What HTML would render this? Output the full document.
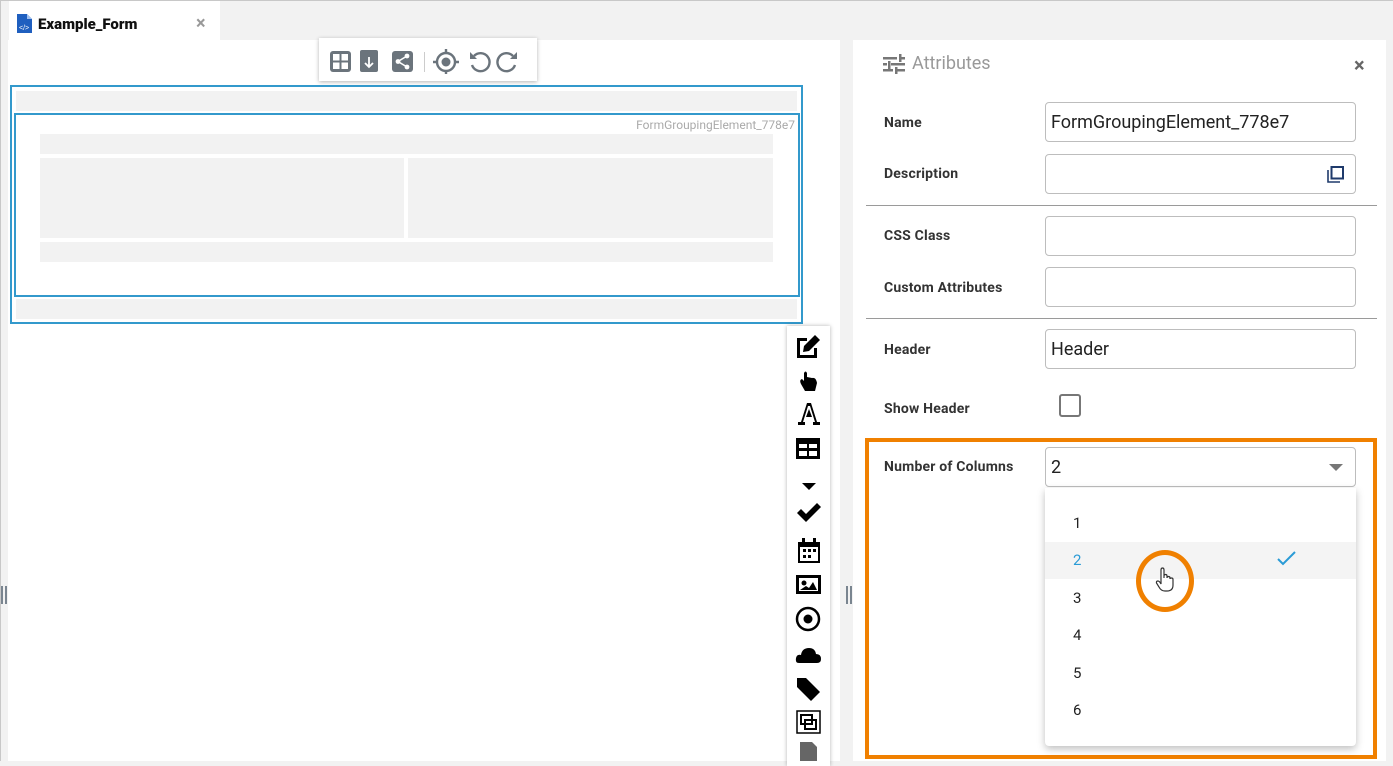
<!DOCTYPE html>
<html><head><meta charset="utf-8">
<style>
*{box-sizing:border-box;margin:0;padding:0}
body{width:1393px;height:761px;background:#f2f2f2;position:relative;overflow:hidden;font-family:"Roboto","Liberation Sans",sans-serif}
.a{position:absolute}
.g{position:absolute;background:#f2f2f2}
.lbl{position:absolute;left:884px;font-size:14px;font-weight:bold;color:#333;letter-spacing:.2px}
.inp{position:absolute;left:1045px;width:311px;height:40px;border:1px solid #bdbdbd;border-radius:4px;background:#fff;font-size:18px;color:#222;padding:9px 0 0 5px}
.hr{position:absolute;left:866px;width:511px;height:1px;background:#9a9a9a}
.it{position:absolute;left:1073px;font-size:15px;color:#222}
</style></head><body>
<div class="a" style="left:0;top:0;width:1393px;height:1px;background:#c8c8c8"></div>
<div class="a" style="left:0;top:0;width:1px;height:761px;background:#c8c8c8"></div>
<!-- tab -->
<div class="a" style="left:9px;top:1px;width:211px;height:39px;background:#fff"></div>
<svg class="a" style="left:17px;top:14px" width="15" height="19" viewBox="0 0 15 19"><path d="M0 0H10L15 5V19H0Z" fill="#1f5fbf"/><path d="M10 0V5H15" fill="#9fbfee"/><text x="2" y="16" font-size="7" fill="#fff" font-family="Liberation Sans">&lt;/&gt;</text></svg>
<div class="a" style="left:38px;top:15px;font-size:15px;font-weight:900;color:#111">Example_Form</div>
<div class="a" style="left:196px;top:13px;font-size:18px;color:#999;font-weight:bold">×</div>
<!-- left strip handle -->
<div class="a" style="left:1px;top:586px;width:6px;height:18px;border-left:2px solid #7a8590;border-right:2px solid #7a8590"></div>
<!-- canvas -->
<div class="a" style="left:8px;top:40px;width:832px;height:721px;background:#fff"></div>
<div class="a" style="left:319px;top:38px;width:218px;height:43px;background:#fff;box-shadow:0 1px 4px rgba(0,0,0,.3)"></div>
<svg class="a" style="left:329px;top:48px" width="200" height="26" viewBox="0 0 200 26">
<g fill="#6b747c">
<rect x="1" y="3" width="21" height="21" rx="3"/>
<rect x="31" y="2" width="18" height="22" rx="2"/>
<rect x="63" y="3" width="21" height="21" rx="3"/>
</g>
<g fill="#fff"><rect x="4" y="6" width="6.5" height="6.5"/><rect x="12.5" y="6" width="6.5" height="6.5"/><rect x="4" y="14.5" width="6.5" height="6.5"/><rect x="12.5" y="14.5" width="6.5" height="6.5"/>
<circle cx="78" cy="8" r="2.4"/><circle cx="78" cy="19" r="2.4"/><circle cx="69" cy="13.5" r="2.4"/></g>
<path d="M78 8L69 13.5L78 19" stroke="#fff" stroke-width="1.6" fill="none"/>
<path d="M40 9V19M36 15L40 19L44 15" stroke="#fff" stroke-width="1.8" fill="none"/>
<rect x="95" y="4" width="1" height="20" fill="#ccc"/>
<g stroke="#6b747c" stroke-width="2.4" fill="none"><circle cx="117" cy="14" r="9"/><path d="M117 1V5M117 23V27M104 14H108M126 14H130"/>
<path d="M145 8A9 9 0 1 1 143 17"/><path d="M184 8A9 9 0 1 0 186 17"/></g>
<circle cx="117" cy="14" r="4.5" fill="#6b747c"/>
<path d="M141 4V11H148Z" fill="#6b747c"/><path d="M188 4V11H181Z" fill="#6b747c"/>
</svg>
<div class="a" style="left:10px;top:85px;width:793px;height:239px;border:2px solid #3399cc"></div>
<div class="g" style="left:16px;top:91px;width:781px;height:20px"></div>
<div class="a" style="left:14px;top:113px;width:786px;height:184px;border:2px solid #3399cc"></div>
<div class="a" style="left:600px;top:118px;width:195px;text-align:right;font-size:12px;color:#aaa">FormGroupingElement_778e7</div>
<div class="g" style="left:40px;top:134px;width:733px;height:20px"></div>
<div class="g" style="left:40px;top:158px;width:364px;height:80px"></div>
<div class="g" style="left:408px;top:158px;width:365px;height:80px"></div>
<div class="g" style="left:40px;top:242px;width:733px;height:20px"></div>
<div class="g" style="left:16px;top:299px;width:781px;height:20px"></div>
<!-- vertical toolbar -->
<div class="a" style="left:787px;top:326px;width:43px;height:440px;background:#fff;box-shadow:0 0 4px rgba(0,0,0,.3)"></div>
<svg class="a" style="left:795px;top:333px" width="28" height="428" viewBox="0 0 28 428">
<g fill="#000">
<path d="M2 5H12V8H5V22H19V15H22V25H2Z"/><path d="M20 2L25 7L14 18L8 19L9 13Z"/>
<path d="M9 40V48L7 46Q4 47 6 51L10 58H20L22 50Q21 44 17 45L12 44V40Q10.5 37 9 40Z"/>
<path d="M3 92H10V89H8L13 73H15L20 89H18V92H25V89H22L16 70H12L6 89H3ZM11 84H17L14 76Z"/>
<path d="M1 105H25V126H1ZM4 111V115H12V111ZM14 111V115H22V111ZM4 118V123H12V118ZM14 118V123H22V118Z"/>
<path d="M7 150H21L14 157Z"/>
<path d="M2 180L6 176L11 181L22 170L26 174L11 189Z"/>
<path d="M3 209H25V230H3ZM5 214V228H23V214ZM7 205H10V211H7ZM18 205H21V211H18Z"/>
<rect x="8" y="216" width="3" height="3"/><rect x="13" y="216" width="3" height="3"/><rect x="18" y="216" width="3" height="3"/><rect x="8" y="222" width="3" height="3"/><rect x="13" y="222" width="3" height="3"/>
<path d="M1 242H26V261H1ZM4 245V258H23V245Z"/><circle cx="9" cy="250" r="2.5"/><path d="M5 257L11 253L14 255L18 249L22 257Z"/>
<circle cx="13" cy="286" r="11" fill="none" stroke="#000" stroke-width="2.5"/><circle cx="13" cy="286" r="4.5"/>
<path d="M4 330Q0 330 1 325Q2 321 6 322Q7 315 14 315Q20 315 21 321Q26 321 26 326Q26 330 22 330Z"/>
<path d="M2 345V354L16 368L25 359L11 345Z"/>
<path d="M2 378H25V400H2Z" fill="none" stroke="#000" stroke-width="1.5"/><rect x="6" y="382" width="11" height="9" fill="none" stroke="#000" stroke-width="2"/><rect x="10" y="387" width="11" height="9" fill="none" stroke="#000" stroke-width="2"/>
<path d="M5 409H17L22 414V428H5Z" fill="#666"/>
</g>
</svg>
<!-- splitter -->
<div class="a" style="left:846px;top:586px;width:6px;height:18px;border-left:2px solid #7a8590;border-right:2px solid #7a8590"></div>
<!-- right panel -->
<div class="a" style="left:853px;top:40px;width:533px;height:721px;background:#fff"></div>
<svg class="a" style="left:883px;top:54px" width="22" height="20" viewBox="0 0 22 20"><g fill="#777"><rect x="0" y="3" width="14" height="2.5"/><rect x="16" y="0" width="2.5" height="8"/><rect x="18" y="3" width="4" height="2.5"/><rect x="0" y="9" width="4" height="2.5"/><rect x="5" y="7" width="2.5" height="8"/><rect x="8" y="9" width="14" height="2.5"/><rect x="0" y="15" width="10" height="2.5"/><rect x="12" y="13" width="2.5" height="7"/><rect x="14" y="15" width="8" height="2.5"/></g></svg>
<div class="a" style="left:912px;top:53px;font-size:18px;color:#999">Attributes</div>
<div class="a" style="left:1354px;top:53px;font-size:20px;color:#666;font-weight:bold">×</div>

<div class="lbl" style="top:115px">Name</div>
<div class="inp" style="top:102px">FormGroupingElement_778e7</div>
<div class="lbl" style="top:166px">Description</div>
<div class="inp" style="top:154px"></div>
<svg class="a" style="left:1327px;top:166px" width="17" height="17" viewBox="0 0 17 17"><path d="M1 4V16H13" stroke="#1f3a6b" stroke-width="1.6" fill="none"/><rect x="4.5" y="1" width="11.5" height="11.5" stroke="#1f3a6b" stroke-width="2" fill="none"/></svg>
<div class="hr" style="top:205px"></div>
<div class="lbl" style="top:228px">CSS Class</div>
<div class="inp" style="top:216px"></div>
<div class="lbl" style="top:280px">Custom Attributes</div>
<div class="inp" style="top:267px"></div>
<div class="hr" style="top:318px"></div>
<div class="lbl" style="top:342px">Header</div>
<div class="inp" style="top:329px">Header</div>
<div class="lbl" style="top:401px">Show Header</div>
<div class="a" style="left:1059px;top:394px;width:22px;height:23px;border:2px solid #777;border-radius:3px"></div>

<div class="a" style="left:865px;top:438px;width:512px;height:321px;border:4px solid #f08000"></div>
<div class="lbl" style="top:459px">Number of Columns</div>
<div class="inp" style="top:447px">2</div>
<div class="a" style="left:1329px;top:464px;width:0;height:0;border-left:7px solid transparent;border-right:7px solid transparent;border-top:7px solid #777"></div>
<div class="a" style="left:1045px;top:488px;width:311px;height:258px;background:#fff;border-radius:0 0 4px 4px;box-shadow:0 3px 8px rgba(0,0,0,.25)"></div>
<div class="a" style="left:1045px;top:542px;width:311px;height:37px;background:#f4f4f4"></div>
<div class="it" style="top:514px">1</div>
<div class="it" style="top:551px;color:#2a9bd6">2</div>
<div class="it" style="top:589px">3</div>
<div class="it" style="top:626px">4</div>
<div class="it" style="top:664px">5</div>
<div class="it" style="top:701px">6</div>
<svg class="a" style="left:1277px;top:551px" width="19" height="15" viewBox="0 0 19 15"><path d="M1 8L6 13L18 1" stroke="#2a9bd6" stroke-width="2" fill="none"/></svg>
<div class="a" style="left:1136px;top:550px;width:58px;height:62px;border:5px solid #f08000;border-radius:50%"></div>
<svg class="a" style="left:1155px;top:567px" width="20" height="26" viewBox="0 0 20 26"><path d="M6 15V3Q6 1 7.5 1Q9 1 9 3V11V9Q9 7.5 10.5 7.5Q12 7.5 12 9V11Q12 9.5 13.5 9.5Q15 9.5 15 11V12Q15 11 16.5 11Q18 11 18 12.5V18Q18 24 12 24H10Q6 24 4 20L1.5 16Q1 14 3 14Q4.5 14 6 17Z" fill="#fff" stroke="#333" stroke-width="1.2"/></svg>
</body></html>
